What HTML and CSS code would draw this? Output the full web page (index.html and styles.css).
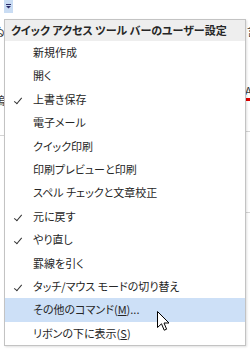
FILE: index.html
```html
<!DOCTYPE html>
<html lang="ja">
<head>
    <meta charset="UTF-8">
    <meta name="viewport" content="width=device-width, initial-scale=1.0">
    <link rel="stylesheet" href="styles.css">
    <title>クイック アクセス ツール バーのユーザー設定</title>
</head>
<body>
    <div class="pantalla">
        <!-- restos del documento detrás del menú -->
        <span class="fondo fondo-izq1">ゐ</span>
        <span class="fondo fondo-izq2">䖚</span>
        <span class="fondo fondo-der1">言</span>
        <span class="fondo fondo-der2">A</span>
        <span class="marca-roja"></span>
        <span class="linea-fondo linea1"></span>
        <span class="linea-fondo linea2"></span>
        <span class="linea-fondo linea3"></span>

        <div class="barra">
            <div class="boton-qat">
                <svg width="9" height="13" viewBox="0 0 9 13">
                    <rect x="2" y="4" width="5" height="1" fill="#2b2b6b"/>
                    <path d="M2 6 H7 L4.5 8.5 Z" fill="#2b2b6b"/>
                </svg>
            </div>
        </div>

        <div class="menu">
            <div class="cabecera">クイック アクセス ツール バーのユーザー設定</div>
            <ul class="opciones">
                <li>新規作成</li>
                <li>開く</li>
                <li class="marcado">上書き保存</li>
                <li>電子メール</li>
                <li>クイック印刷</li>
                <li>印刷プレビューと印刷</li>
                <li>スペル チェックと文章校正</li>
                <li class="marcado">元に戻す</li>
                <li class="marcado">やり直し</li>
                <li>罫線を引く</li>
                <li class="marcado">タッチ/マウス モードの切り替え</li>
                <li class="activo">その他のコマンド(<u>M</u>)...</li>
                <li>リボンの下に表示(<u>S</u>)</li>
            </ul>
        </div>

        <svg class="cursor" width="13" height="21" viewBox="0 0 13 21">
            <path d="M0.5 0.5 V16.5 L4.5 12.8 L7.2 19.2 L9.6 18.2 L7 12 H12 Z" fill="#fff" stroke="#000" stroke-width="1" stroke-linejoin="miter"/>
        </svg>
    </div>
</body>
</html>
```

FILE: styles.css
```css
* {
    margin: 0;
    padding: 0;
    box-sizing: border-box;
}
body {
    background-color: #ffffff;
    font-family: "Noto Sans CJK JP", "Noto Sans", sans-serif;
    font-feature-settings: "palt";
    color: #262626;
}
.pantalla {
    position: relative;
    width: 250px;
    height: 350px;
    overflow: hidden;
}
.barra {
    height: 19px;
    padding-left: 4px;
}
.boton-qat {
    width: 9px;
    height: 13px;
    background-color: #c9dcf3;
}
.boton-qat svg {display: block;}

.menu {
    position: relative;
    width: 242px;
    margin-left: 4px;
    background-color: #ffffff;
    border: 1px solid #c3c3c3;
    box-shadow: 1px 1px 2px rgba(0, 0, 0, 0.12);
}
.cabecera {
    height: 21px;
    line-height: 21px;
    padding-left: 6px;
    font-size: 11px;
    font-weight: bold;
    background-color: #eeeeee;
    color: #262626;
    white-space: nowrap;
}
.opciones {list-style: none;}
.opciones li {
    position: relative;
    height: 23.4px;
    line-height: 23.4px;
    padding-left: 28px;
    font-size: 11px;
    white-space: nowrap;
}
.opciones li u {text-underline-offset: 1px;}
.opciones li.marcado::before {
    content: "";
    position: absolute;
    left: 11px;
    top: 8px;
    width: 3px;
    height: 7px;
    border-right: 1.5px solid #333;
    border-bottom: 1.5px solid #333;
    transform: rotate(40deg);
}
.opciones li.activo {background-color: #cde0f7;}

.fondo {
    position: absolute;
    font-size: 11px;
    color: #333;
}
.fondo-izq1 {left: -6px; top: 23px;}
.fondo-izq2 {left: -6px; top: 92px;}
.fondo-der1 {left: 247px; top: 23px;}
.fondo-der2 {left: 245px; top: 82px;}
.marca-roja {
    position: absolute;
    left: 246px;
    top: 98px;
    width: 4px;
    height: 3px;
    background-color: #e00000;
}
.linea-fondo {
    position: absolute;
    height: 1px;
    background-color: #d4d4d4;
}
.linea1 {left: 0; top: 135px; width: 4px;}
.linea2 {left: 246px; top: 131px; width: 4px;}
.linea3 {left: 246px; top: 212px; width: 4px;}

.cursor {
    position: absolute;
    left: 157px;
    top: 311px;
}
```
